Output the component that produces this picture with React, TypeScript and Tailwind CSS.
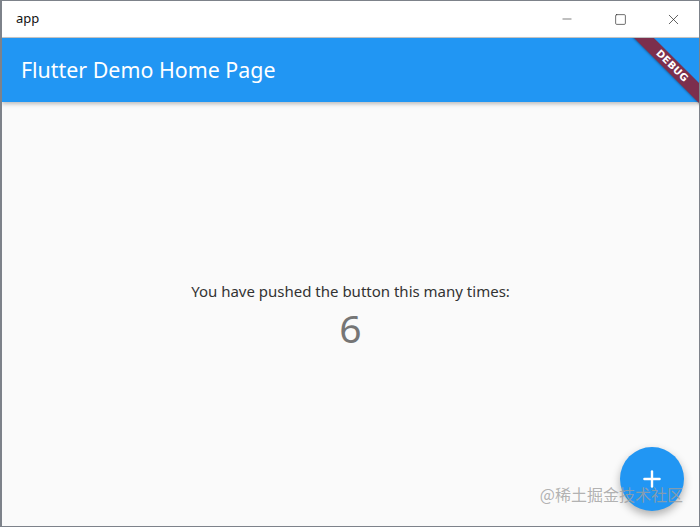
import { Minus, Square, X, Plus } from "lucide-react";

const sans = "font-['Segoe_UI','Noto_Sans','Open_Sans',sans-serif]";

function TitleBar() {
    return (
        <div className="h-[37px] shrink-0 flex items-center justify-between bg-white border-b border-[#c8c8c8]">
            <span className={`${sans} pl-[14px] text-[13px] text-[#111]`}>app</span>
            <div className="flex h-full items-center text-[#222] pr-[3px]">
                <div className="w-[46px] h-full flex items-center justify-center">
                    <Minus size={14} strokeWidth={1} />
                </div>
                <div className="w-[60px] h-full flex items-center justify-center">
                    <Square size={13} strokeWidth={1.2} />
                </div>
                <div className="w-[46px] h-full flex items-center justify-center">
                    <X size={17} strokeWidth={1} />
                </div>
            </div>
        </div>
    );
}

function DebugBanner() {
    return (
        <div className="absolute inset-0 overflow-hidden pointer-events-none z-20">
            <div className="absolute left-[610px] top-[21px] w-[120px] h-[14px] rotate-45 bg-[#7c2f4d] shadow-[0_1px_2px_rgba(0,0,0,0.3)] flex items-center justify-center">
                <span className="font-['DejaVu_Sans',sans-serif] text-[10px] font-bold text-white tracking-[0.3px] leading-none">
                    DEBUG
                </span>
            </div>
        </div>
    );
}

export default function App() {
    return (
        <div className="w-[700px] h-[527px] flex flex-col bg-white border border-l-2 border-[#7d828a] overflow-hidden">
            <TitleBar />
            <div className="relative flex-1 flex flex-col">
                <header className="h-[64px] shrink-0 flex items-center bg-[#2196f3] shadow-[0_2px_4px_rgba(0,0,0,0.25)] z-10">
                    <h1 className={`${sans} pl-[19px] text-[21.4px] text-white`}>Flutter Demo Home Page</h1>
                </header>
                <main className="relative flex-1 flex flex-col items-center justify-center bg-[#fafafa]">
                    <p className={`${sans} text-[15px] text-[#333] leading-[22px] pt-[2px]`}>
                        You have pushed the button this many times:
                    </p>
                    <p className={`${sans} text-[39px] text-[#757575] leading-[46px] pt-[3px]`}>6</p>
                    <button className="absolute right-[15px] bottom-[15px] w-[64px] h-[64px] rounded-full bg-[#2196f3] flex items-center justify-center text-white shadow-[0_4px_8px_rgba(0,0,0,0.3)]">
                        <Plus size={26} strokeWidth={2.2} />
                    </button>
                    <span className="absolute right-[16px] bottom-[20px] font-['Noto_Sans_CJK_SC',sans-serif] text-[16px] text-[#9e9e9e]/80">
                        @稀土掘金技术社区
                    </span>
                </main>
                <DebugBanner />
            </div>
        </div>
    );
}
